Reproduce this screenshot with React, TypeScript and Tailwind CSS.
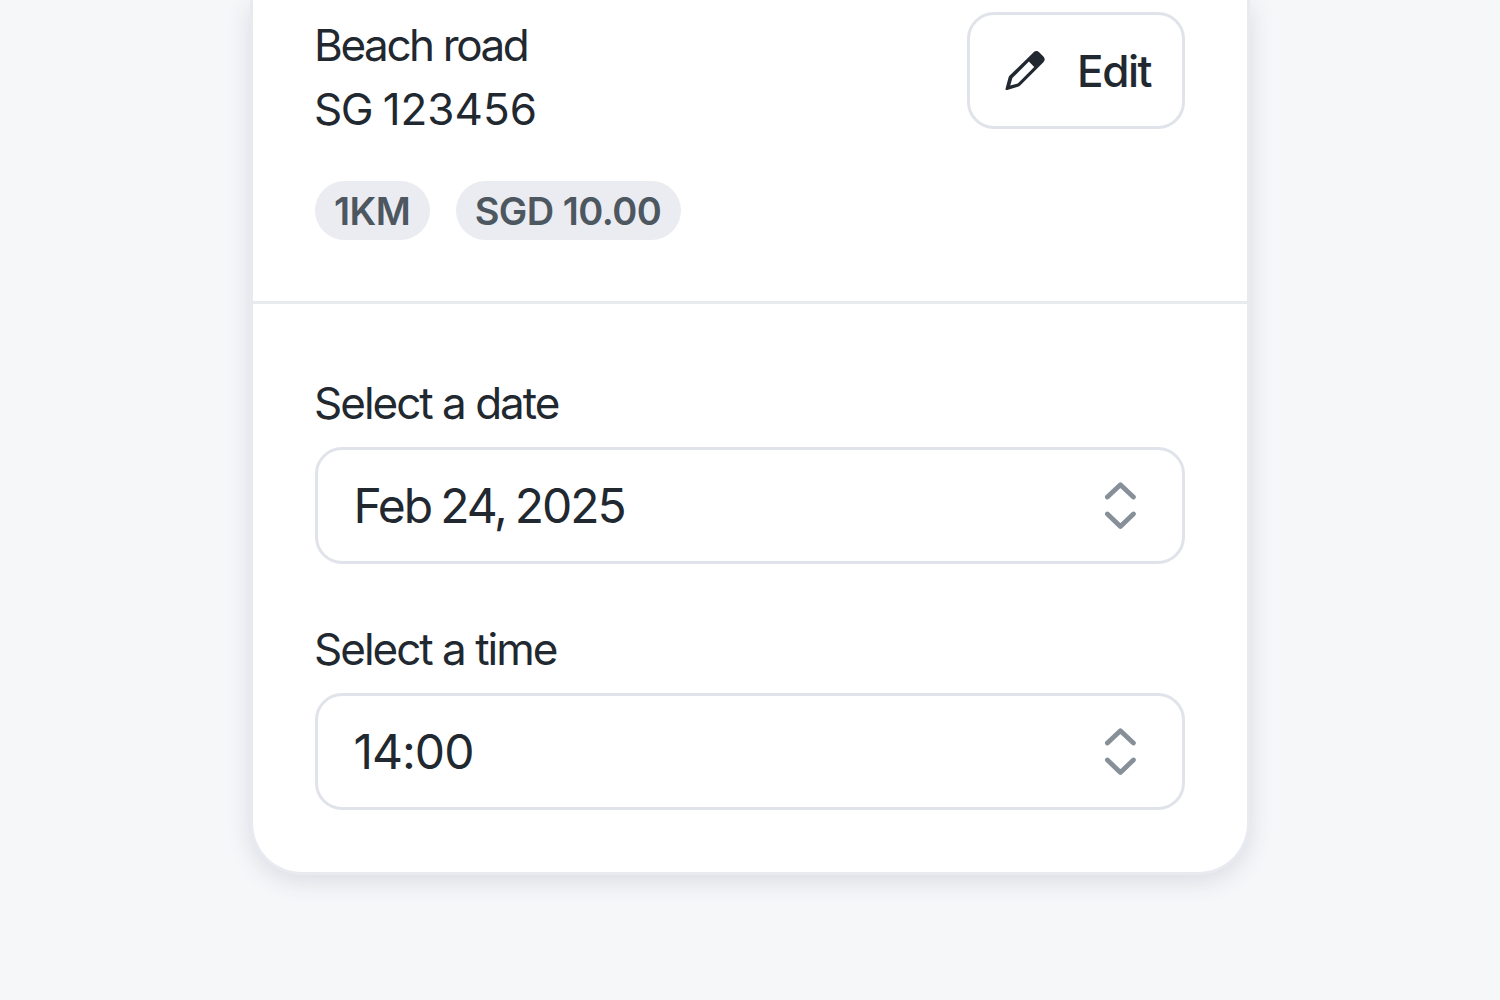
import React, { useState } from 'react';

interface SelectFieldProps {
  label: string;
  value: string;
  valueClassName: string;
  onClick?: () => void;
}

function PencilIcon() {
  return (
    <svg className="h-[40px] w-[40px] shrink-0" viewBox="0 0 40 40" fill="none">
      <path
        fillRule="evenodd"
        d="M0.6 37.6 L3.4 27 Q3.7 25.6 4.7 24.6 L28.4 1.4 Q31.4 -1.3 34.4 1.5 L38.4 5.4 Q41 8.3 38.4 11.3 L15.4 34.2 Q14.2 35.4 12.9 35.8 L2.2 39 Q0.2 39.5 0.6 37.6 Z M23.9 10.6 L7.4 27 L5.2 34.6 L12.8 32.4 L29.2 15.9 Z"
        fill="#212830"
      />
    </svg>
  );
}

function ChevronUpDownIcon() {
  return (
    <svg className="h-[48px] w-[32px]" viewBox="0 0 32 48" fill="none">
      <path
        d="M3.4 15 L16.4 2.8 L29.4 15 M3.4 32 L16.4 44.4 L29.4 32"
        stroke="#878f99"
        strokeWidth="4.8"
        strokeLinecap="round"
        strokeLinejoin="round"
      />
    </svg>
  );
}

function Badge({ children }: { children: React.ReactNode }) {
  return (
    <span className="flex h-[58.5px] items-center rounded-full bg-[#ebecf2] pt-[2px] pr-[20px] pl-[19px] text-[38px] font-semibold tracking-[-0.55px] text-[#4d5760]">
      {children}
    </span>
  );
}

function SelectField({ label, value, valueClassName, onClick }: SelectFieldProps) {
  return (
    <div className="flex flex-col">
      <label className="-ml-px text-[44px] leading-[64px] tracking-[-2px]">{label}</label>
      <button
        type="button"
        onClick={onClick}
        className="mt-[12px] flex h-[117px] items-center justify-between rounded-[27px] border-[3px] border-[#e0e3e9] bg-white pr-[46px] pl-[35.5px] text-[48px]"
      >
        <span className={valueClassName}>{value}</span>
        <ChevronUpDownIcon />
      </button>
    </div>
  );
}

export default function App() {
  const [date] = useState('Feb 24, 2025');
  const [time] = useState('14:00');

  return (
    <div className="flex h-[1000px] w-[1500px] items-start justify-center overflow-hidden bg-[#f6f7f9] font-[Inter,sans-serif] text-[#212830]">
      <div className="h-[875px] w-[1000px] rounded-b-[52px] border-x-[3px] border-b-[3px] border-[#e9eaf0] bg-white shadow-[0_6px_24px_0_rgba(50,60,100,0.14)]">
        <div className="flex h-[304px] items-start justify-between border-b-[3px] border-[#e9eaee] px-[62px] pt-[12px]">
          <div>
            <div className="-ml-px pt-px text-[44px] leading-[64px]">
              <p className="tracking-[-2.4px]">Beach road</p>
              <p className="tracking-[-1.6px]">
                SG <span className="tracking-[0px]">123456</span>
              </p>
            </div>
            <div className="mt-[40px] flex gap-[25.5px]">
              <Badge>1KM</Badge>
              <Badge>SGD 10.00</Badge>
            </div>
          </div>
          <button
            type="button"
            className="flex h-[117px] w-[218px] items-center gap-[32px] rounded-[27px] border-[3px] border-[#e0e3e9] pl-[35px] text-[44px] font-medium tracking-[-1.4px]"
          >
            <PencilIcon />
            <span>Edit</span>
          </button>
        </div>

        <div className="flex flex-col gap-[53px] px-[62px] pt-[67px]">
          <SelectField
            label="Select a date"
            value={date}
            valueClassName="tracking-[-2.1px] [word-spacing:-2.2px]"
          />
          <SelectField label="Select a time" value={time} valueClassName="tracking-[-1px]" />
        </div>
      </div>
    </div>
  );
}
